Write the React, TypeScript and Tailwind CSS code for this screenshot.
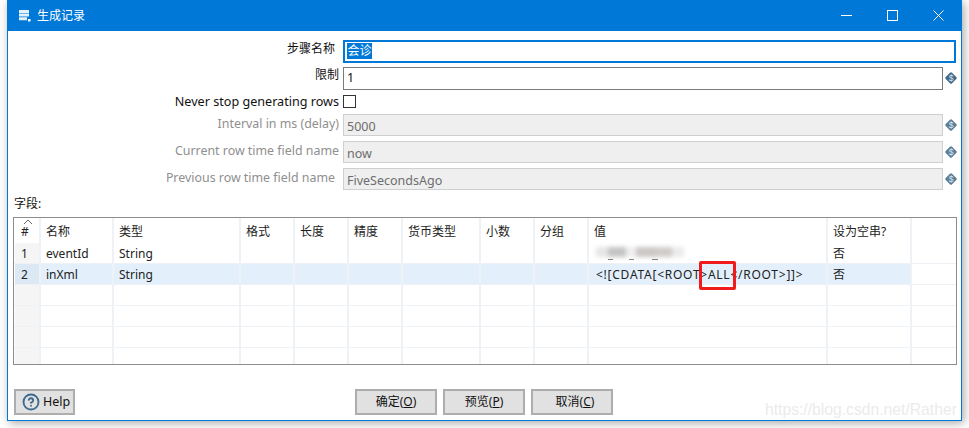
import { CircleHelp } from "lucide-react"

const sans = "font-['Noto_Sans','Noto_Sans_CJK_SC',sans-serif]"

const columns = [
  { label: "#", width: 26 },
  { label: "名称", width: 73 },
  { label: "类型", width: 127 },
  { label: "格式", width: 54 },
  { label: "长度", width: 54 },
  { label: "精度", width: 54 },
  { label: "货币类型", width: 78 },
  { label: "小数", width: 54 },
  { label: "分组", width: 54 },
  { label: "值", width: 239 },
  { label: "设为空串?", width: 84 },
]

const rows = [
  ["1", "eventId", "String", "", "", "", "", "", "", "", "否"],
  ["2", "inXml", "String", "", "", "", "", "", "", "<![CDATA[<ROOT>ALL</ROOT>]]>", "否"],
  [],
  [],
  [],
  [],
]

function VarIcon({ faded }: { faded?: boolean }) {
  return (
    <svg width="14" height="14" viewBox="0 0 14 14" className="shrink-0">
      <rect x="2.5" y="2.5" width="9" height="9" rx="1.5" transform="rotate(45 7 7)" fill={faded ? "#5b7d98" : "#44698a"} />
      <text x="7" y="10" textAnchor="middle" fontSize="8.5" fill="#dfe8ef" fontFamily="Liberation Sans">$</text>
    </svg>
  )
}

function FormRow({ label, value, disabled, pr = "pr-[4px]" }: { label: string; value: string; disabled?: boolean; pr?: string }) {
  return (
    <div className={`flex mb-[5px] ${disabled ? "h-[22px]" : "h-[24px]"}`}>
      <div className={`w-[335px] ${pr} text-right ${disabled ? "text-[12.4px] leading-[20px] text-[#8f8f8f]" : "text-[12px] leading-[16px] text-[#111]"}`}>{label}</div>
      <div
        className={`w-[600px] h-full border pl-[3px] text-[12.5px] ${
          disabled ? "leading-[23px] border-[#cfcfcf] bg-[#efefef] text-[#6d6d6d]" : "leading-[19px] border-[#7a7a7a] bg-white text-[#111]"
        }`}
      >
        {value}
      </div>
      <div className="ml-[1px] flex items-center">
        <VarIcon faded={disabled} />
      </div>
    </div>
  )
}

function DialogButton({ label, hot, shift = "" }: { label: string; hot: string; shift?: string }) {
  return (
    <div className={`flex h-[26px] w-[82px] items-center justify-center border-2 border-[#adadad] bg-[#e1e1e1] text-[12px] text-[#111] ${shift}`}>
      {label}(<span className="underline">{hot}</span>)
    </div>
  )
}

export default function App() {
  return (
    <div className={`h-[428px] w-[969px] overflow-hidden bg-white pl-[7px] ${sans}`}>
      <div className="relative h-[421px] w-[955px] border-x border-b border-[#0078d7] bg-white shadow-[2px_2px_9px_rgba(0,0,0,0.35)]">
        {/* title bar */}
        <div className="flex h-[31px] items-center bg-[#0078d7] pl-[11px] text-white">
          <svg width="12" height="12" viewBox="0 0 12 12" className="mr-[6px]">
            <path d="M0 0h10v3H0zM0 3.6h10v3H0zM0 7.2h8v3H0z" fill="#fff" opacity="0.9" />
            <rect x="9" y="9" width="2.5" height="2.5" fill="#fff" />
          </svg>
          <span className="text-[12px]">生成记录</span>
          <div className="ml-auto flex items-center">
            <div className="h-[1px] w-[11px] bg-white" />
            <div className="ml-[35px] h-[11px] w-[11px] border border-white" />
            <svg width="11" height="11" viewBox="0 0 11 11" className="ml-[35px] mr-[17px]">
              <path d="M0.5 0.5l10 10M10.5 0.5l-10 10" stroke="#fff" fill="none" />
            </svg>
          </div>
        </div>

        {/* form */}
        <div className="flex h-[164px] flex-col pt-[9px]">
          <div className="mb-[4px] flex h-[23px]">
            <div className="w-[335px] pr-[8px] text-right text-[12px] leading-[18px] text-[#111]">步骤名称</div>
            <div className="flex h-full w-[613px] items-center border-2 border-[#0078d7] pl-[2px] text-[12px] text-white">
              <span className="bg-[#0078d7] px-[0.5px] leading-[16px]">会诊</span>
            </div>
          </div>
          <FormRow label="限制" value="1" />
          <div className="mb-[6px] flex h-[13px] items-center">
            <div className="w-[335px] pr-[4px] text-right text-[12.6px] leading-[16px] text-[#111]">Never stop generating rows</div>
            <div className="h-[13px] w-[13px] border border-[#333] bg-white" />
          </div>
          <FormRow label="Interval in ms (delay)" value="5000" disabled />
          <FormRow label="Current row time field name" value="now" disabled />
          <FormRow label="Previous row time field name" value="FiveSecondsAgo" disabled pr="pr-[8px]" />
        </div>

        {/* fields table */}
        <div className="ml-[6px] text-[12px] leading-[18px] text-[#111]">字段:</div>
        <div className="relative ml-[5px] mt-[4px] h-[148px] w-[944px] overflow-hidden border border-[#8c8c8c] bg-white">
          <div className="flex h-[25px] pl-[1px]">
            {columns.map((col, i) => (
              <div
                key={col.label}
                style={{ width: col.width }}
                className={`h-full border-r-2 border-[#eef1f5] pt-[5px] text-[12px] leading-[17px] text-[#222] ${i === 0 ? "pl-[6px]" : "pl-[5px]"}`}
              >
                {col.label}
              </div>
            ))}
          </div>
          {rows.map((row, r) => (
            <div key={r} className="flex h-[21px] border-b border-[#eef1f5] pl-[1px]">
              {columns.map((col, i) => (
                <div
                  key={col.label}
                  style={{ width: col.width }}
                  className={`h-full truncate border-r-2 border-[#eef1f5] text-[12px] leading-[22px] text-[#222] ${
                    i === 0 ? (r === 1 ? "bg-[#dce9f4] pl-[6px]" : "bg-[#f5f5f5] pl-[6px]") : r === 1 ? "bg-[#e3f0fb]" : ""
                  } ${i === 9 ? "pl-[7px] tracking-[0.75px]" : i === 0 ? "" : "pl-[5px]"}`}
                >
                  {row[i] ?? ""}
                  {r === 0 && i === 9 && (
                    <div className="flex flex-col pt-[4px]">
                      <div className="flex h-[10px] blur-[2px]">
                        <div className="h-[10px] w-[12px] bg-[#e6e6e6]" />
                        <div className="h-[10px] w-[18px] bg-[#c4c4c4]" />
                        <div className="h-[10px] w-[10px] bg-[#efefef]" />
                        <div className="h-[10px] w-[20px] bg-[#cbc8c6]" />
                        <div className="h-[10px] w-[16px] bg-[#d0ccca]" />
                        <div className="h-[10px] w-[12px] bg-[#ebebeb]" />
                      </div>
                      <div className="mt-[2px] flex h-[1px] pl-[12px]">
                        <div className="w-[5px] bg-[#777]" />
                        <div className="ml-[16px] w-[5px] bg-[#777]" />
                        <div className="ml-[18px] w-[6px] bg-[#777]" />
                      </div>
                    </div>
                  )}
                </div>
              ))}
            </div>
          ))}
          <svg width="10" height="6" viewBox="0 0 10 6" className="absolute left-[9px] top-[1px]">
            <path d="M1 5l4-4 4 4" stroke="#666" fill="none" />
          </svg>
        </div>

        {/* bottom buttons */}
        <div className="ml-[6px] mt-[23px] flex h-[28px] items-center">
          <div className="flex h-[26px] w-[61px] items-center gap-[3px] border-2 border-[#adadad] bg-[#e1e1e1] pl-[6px] text-[12.5px] text-[#111]">
            <CircleHelp size={18} strokeWidth={2.5} className="text-[#3d6a8e]" />
            Help
          </div>
          <div className="ml-[280px] flex gap-[6px]">
            <DialogButton label="确定" hot="O" />
            <DialogButton label="预览" hot="P" />
            <DialogButton label="取消" hot="C" shift="pl-[6px]" />
          </div>
        </div>

        {/* annotations pasted over the screenshot */}
        <div className="absolute left-[691px] top-[261px] h-[29px] w-[37px] rounded-[2px] border-[3px] border-[#f01c1c]" />
        <div className="absolute left-[757px] top-[400px] whitespace-nowrap font-['Liberation_Sans',sans-serif] text-[15.7px] leading-[20px] text-[#ebebeb]">
          https://blog.csdn.net/Rather
        </div>
      </div>
    </div>
  )
}
